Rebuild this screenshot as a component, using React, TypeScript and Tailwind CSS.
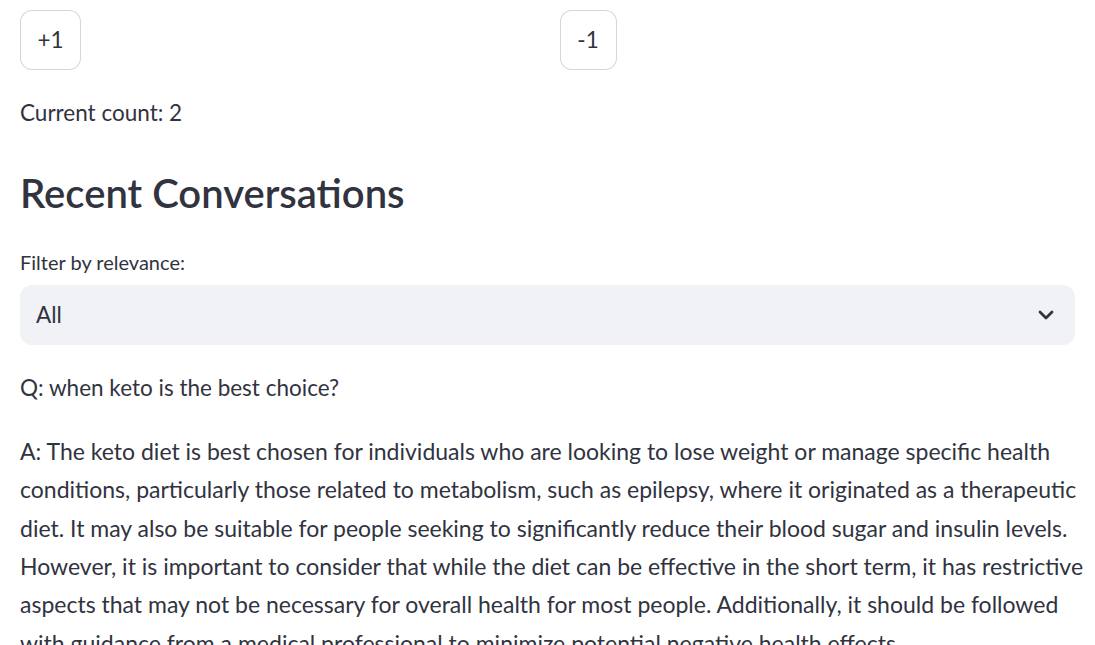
const answer = [
  "A: The keto diet is best chosen for individuals who are looking to lose weight or manage specific health",
  "conditions, particularly those related to metabolism, such as epilepsy, where it originated as a therapeutic",
  "diet. It may also be suitable for people seeking to significantly reduce their blood sugar and insulin levels.",
  "However, it is important to consider that while the diet can be effective in the short term, it has restrictive",
  "aspects that may not be necessary for overall health for most people. Additionally, it should be followed",
  "with guidance from a medical professional to minimize potential negative health effects.",
]

const Chevron = () => (
  <svg width="16" height="10" viewBox="0 0 16 10" fill="none">
    <path d="M2 2l6 6 6-6" stroke="#31333f" strokeWidth="2.8" strokeLinecap="round" strokeLinejoin="round" />
  </svg>
)

export default function App() {
  return (
    <div className="min-h-screen bg-white px-5 pt-[10px] font-[Lato,sans-serif] text-[#31333f] text-[22.5px] leading-[38.4px]">
      <div className="grid grid-cols-2 gap-6">
        <div>
          <button className="h-[60px] w-[61px] rounded-[12px] border border-[rgba(49,51,63,0.2)] bg-white">+1</button>
        </div>
        <div>
          <button className="h-[60px] w-[57px] rounded-[12px] border border-[rgba(49,51,63,0.2)] bg-white">-1</button>
        </div>
      </div>

      <p className="mt-6">Current count: 2</p>

      <h2 className="mt-9 text-[40px] font-semibold leading-[50px]">Recent Conversations</h2>

      <label className="mt-[27px] block text-[20px] leading-[34px]">Filter by relevance:</label>
      <div className="mt-[6px] flex h-[60px] items-center justify-between rounded-[12px] bg-[#f0f2f6] pl-4 pr-[21px]">
        <span>All</span>
        <Chevron />
      </div>

      <p className="mt-6">Q: when keto is the best choice?</p>

      <p className="mt-6 whitespace-nowrap text-[23px]">
        {answer.map((line, i) => (
          <span key={i}>
            {line}
            {i < answer.length - 1 && <br />}
          </span>
        ))}
      </p>
    </div>
  )
}
